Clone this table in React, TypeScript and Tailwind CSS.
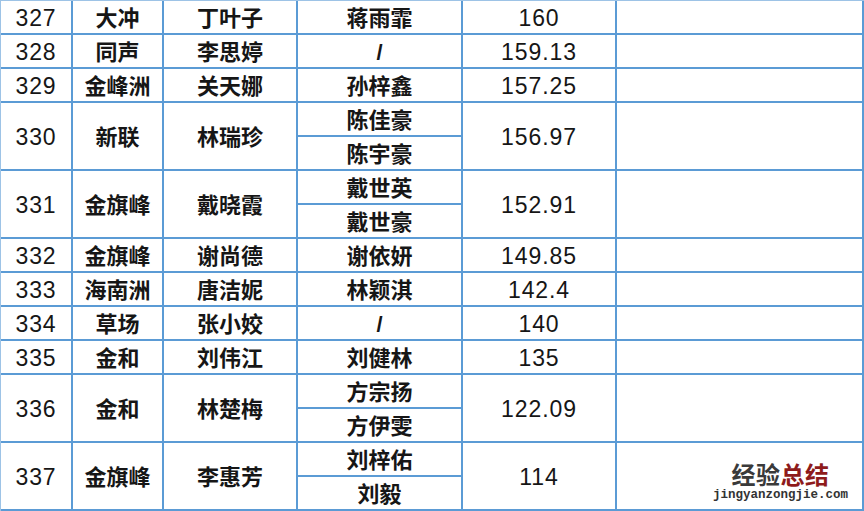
const rows = [
  { no: '327', place: '大冲', name: '丁叶子', kids: ['蒋雨霏'], score: '160' },
  { no: '328', place: '同声', name: '李思婷', kids: ['/'], score: '159.13' },
  { no: '329', place: '金峰洲', name: '关天娜', kids: ['孙梓鑫'], score: '157.25' },
  { no: '330', place: '新联', name: '林瑞珍', kids: ['陈佳豪', '陈宇豪'], score: '156.97' },
  { no: '331', place: '金旗峰', name: '戴晓霞', kids: ['戴世英', '戴世豪'], score: '152.91' },
  { no: '332', place: '金旗峰', name: '谢尚德', kids: ['谢依妍'], score: '149.85' },
  { no: '333', place: '海南洲', name: '唐洁妮', kids: ['林颖淇'], score: '142.4' },
  { no: '334', place: '草场', name: '张小姣', kids: ['/'], score: '140' },
  { no: '335', place: '金和', name: '刘伟江', kids: ['刘健林'], score: '135' },
  { no: '336', place: '金和', name: '林楚梅', kids: ['方宗扬', '方伊雯'], score: '122.09' },
  { no: '337', place: '金旗峰', name: '李惠芳', kids: ['刘梓佑', '刘毅'], score: '114' },
]

// one bordered table cell
function Cell({ className = '', children }: { className?: string; children?: React.ReactNode }) {
  return (
    <div className={`flex items-center justify-center pt-[3px] border-r-2 border-b-2 border-[#5b9bd5] ${className}`}>
      {children}
    </div>
  )
}

export default function App() {
  return (
    <div
      className="relative w-[864px] h-[511px] overflow-hidden bg-white border-t border-l border-[#9dc3e6] text-[#161616] text-[22px] leading-none"
      style={{ fontFamily: '"Liberation Sans", "Noto Sans CJK SC", sans-serif' }}
    >
      {rows.map(r => (
        <div key={r.no} className="flex">
          <Cell className="w-[72px] text-[23px] tracking-[0.04em]">{r.no}</Cell>
          <Cell className="w-[91px] font-semibold">{r.place}</Cell>
          <Cell className="w-[134px] font-semibold">{r.name}</Cell>
          <div className="flex flex-col w-[165px]">
            {r.kids.map(k => (
              <Cell key={k} className="h-[34px] font-semibold">{k}</Cell>
            ))}
          </div>
          <Cell className="w-[154px] text-[23px] tracking-[0.04em]">{r.score}</Cell>
          <Cell className="w-[247px]" />
        </div>
      ))}

      {/* watermark */}
      <div className="absolute right-[16px] bottom-[10px] flex flex-col items-center">
        <div
          className="text-[24px] font-bold leading-none tracking-[0.02em]"
          style={{ fontFamily: '"Noto Sans CJK SC", sans-serif' }}
        >
          <span className="text-[#3a3a3a]">经验</span>
          <span className="text-[#8e1b1b]">总结</span>
        </div>
        <div className="mt-[3px] text-[12.5px] leading-none text-[#333] font-bold" style={{ fontFamily: '"Liberation Mono", monospace' }}>
          jingyanzongjie.com
        </div>
      </div>
    </div>
  )
}
